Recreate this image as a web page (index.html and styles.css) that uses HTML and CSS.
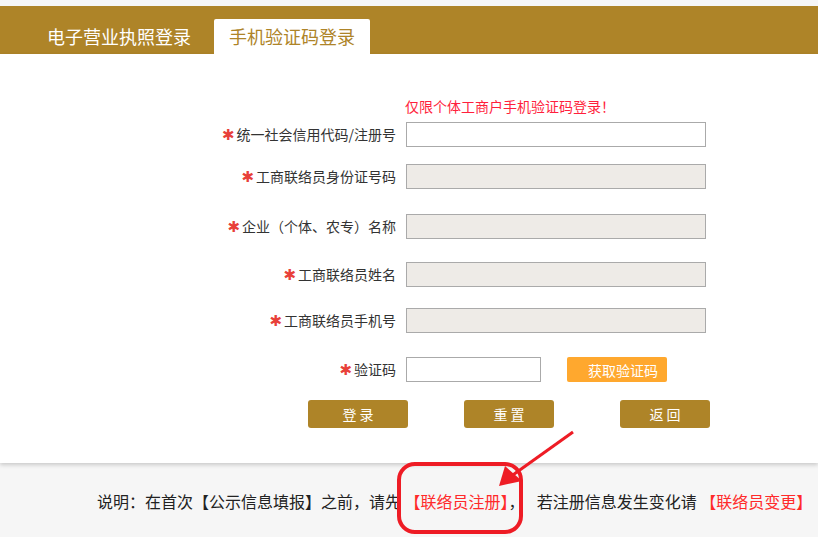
FILE: index.html
```html
<!DOCTYPE html>
<html lang="zh-CN">
<head>
    <meta charset="UTF-8">
    <title>手机验证码登录</title>
    <link rel="stylesheet" href="styles.css">
</head>
<body>
    <div class="tabs">
        <div class="tab">电子营业执照登录</div>
        <div class="tab active">手机验证码登录</div>
    </div>

    <div class="main">
        <div class="notice">仅限个体工商户手机验证码登录！</div>

        <form class="login-form">
            <div class="row">
                <label><span class="star">✱</span>统一社会信用代码/注册号</label>
                <input type="text">
            </div>
            <div class="row r2">
                <label><span class="star">✱</span>工商联络员身份证号码</label>
                <input type="text" class="locked" disabled>
            </div>
            <div class="row r3">
                <label><span class="star">✱</span>企业（个体、农专）名称</label>
                <input type="text" class="locked" disabled>
            </div>
            <div class="row r4">
                <label><span class="star">✱</span>工商联络员姓名</label>
                <input type="text" class="locked" disabled>
            </div>
            <div class="row r5">
                <label><span class="star">✱</span>工商联络员手机号</label>
                <input type="text" class="locked" disabled>
            </div>
            <div class="row r6">
                <label><span class="star">✱</span>验证码</label>
                <input type="text" class="code">
                <button type="button" class="get-code">获取验证码</button>
            </div>

            <div class="actions">
                <button type="button" class="btn btn-login">登录</button>
                <button type="button" class="btn btn-reset">重置</button>
                <button type="button" class="btn btn-back">返回</button>
            </div>
        </form>
    </div>

    <div class="footer">
        说明：在首次【公示信息填报】之前，请先 <a href="#" class="link">【联络员注册】</a><span class="comma">，</span>若注册信息发生变化请 <a href="#" class="link">【联络员变更】</a>
    </div>

    <!-- annotation drawn over the page -->
    <svg class="mark" width="818" height="537" viewBox="0 0 818 537">
        <rect x="399" y="464" width="122" height="68" rx="16" ry="16" fill="none" stroke="#ee1c25" stroke-width="4"/>
        <line x1="573" y1="432" x2="510" y2="477" stroke="#ee1c25" stroke-width="3"/>
        <polygon points="499,486 505,466 522,481" fill="#ee1c25"/>
    </svg>
</body>
</html>
```

FILE: styles.css
```css
*, *::before, *::after {
    box-sizing: border-box;
}

body {
    margin: 0;
    padding: 6px 0 0;
    background-color: #f6f6f6;
    font-family: "Noto Sans CJK SC", "Noto Sans", sans-serif;
    color: #333;
    font-size: 14px;
    position: relative;
    height: 537px;
    overflow: hidden;
}

.tabs {
    display: flex;
    align-items: flex-end;
    height: 48px;
    padding-left: 32px;
    background-color: #ae8428;
}

.tab {
    height: 35px;
    line-height: 35px;
    padding: 0 15px;
    margin-right: 8px;
    font-size: 18px;
    color: white;
}

.tab.active {
    background-color: white;
    color: #ae8428;
    border-radius: 2px 2px 0 0;
}

.main {
    height: 409px;
    padding-top: 42px;
    background-color: white;
    box-shadow: 0 2px 4px rgba(0, 0, 0, 0.18);
}

.notice {
    margin-left: 405px;
    line-height: 20px;
    color: #ff1f3d;
}

.login-form {
    margin-top: 6px;
}

.row {
    display: flex;
    align-items: center;
    height: 25px;
}

.r2 { margin-top: 17px; }
.r3 { margin-top: 25px; }
.r4 { margin-top: 23px; }
.r5 { margin-top: 21px; }
.r6 { margin-top: 24px; }

label {
    width: 396px;
    text-align: right;
    line-height: 25px;
    color: #333;
}

.star {
    color: #e8403a;
    font-family: "DejaVu Sans", sans-serif;
    font-size: 15px;
    font-weight: bold;
    margin-right: 2px;
}

input {
    width: 300px;
    height: 25px;
    margin: 0 0 0 10px;
    padding: 0 4px;
    border: 1px solid #aaa;
    background-color: white;
    font-size: 14px;
}

input.locked {
    background-color: #eeebe7;
}

input.code {
    width: 135px;
}

.get-code {
    width: 100px;
    height: 25px;
    margin-left: 26px;
    padding: 0 0 0 21px;
    text-align: left;
    border: none;
    border-radius: 2px;
    background-color: #ffa82e;
    color: white;
    font-family: inherit;
    font-size: 14px;
    cursor: pointer;
}

.actions {
    display: flex;
    margin-top: 18px;
    padding-left: 308px;
}

.btn {
    height: 28px;
    width: 90px;
    border: none;
    border-radius: 3px;
    background-color: #ae8428;
    color: white;
    font-family: inherit;
    font-size: 14px;
    letter-spacing: 3px;
    text-indent: 3px;
    cursor: pointer;
}

.btn-login { width: 100px; }
.btn-reset { margin-left: 56px; }
.btn-back { margin-left: 66px; }

.footer {
    padding: 27px 0 0 97px;
    line-height: 22px;
    font-size: 16px;
    white-space: nowrap;
    color: #222;
}

.comma {
    margin-right: 12px;
}

.link {
    color: #ff2a2a;
    text-decoration: none;
}

.mark {
    position: absolute;
    top: 0;
    left: 0;
    pointer-events: none;
}
```
